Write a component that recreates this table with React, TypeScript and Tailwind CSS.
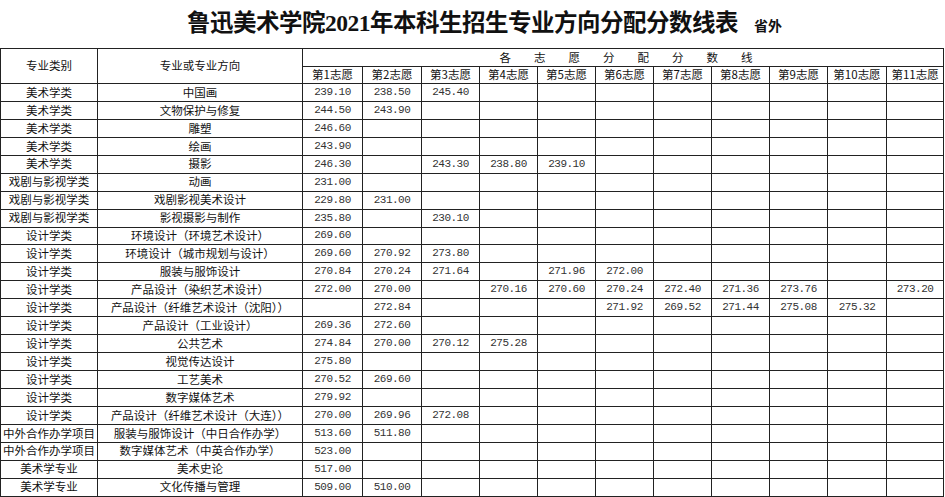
const cjk = { fontFamily: '"Noto Sans CJK SC", sans-serif' };

const rows: string[][] = [
  ['美术学类', '中国画', '239.10', '238.50', '245.40'],
  ['美术学类', '文物保护与修复', '244.50', '243.90'],
  ['美术学类', '雕塑', '246.60'],
  ['美术学类', '绘画', '243.90'],
  ['美术学类', '摄影', '246.30', '', '243.30', '238.80', '239.10'],
  ['戏剧与影视学类', '动画', '231.00'],
  ['戏剧与影视学类', '戏剧影视美术设计', '229.80', '231.00'],
  ['戏剧与影视学类', '影视摄影与制作', '235.80', '', '230.10'],
  ['设计学类', '环境设计（环境艺术设计）', '269.60'],
  ['设计学类', '环境设计（城市规划与设计）', '269.60', '270.92', '273.80'],
  ['设计学类', '服装与服饰设计', '270.84', '270.24', '271.64', '', '271.96', '272.00'],
  ['设计学类', '产品设计（染织艺术设计）', '272.00', '270.00', '', '270.16', '270.60', '270.24', '272.40', '271.36', '273.76', '', '273.20'],
  ['设计学类', '产品设计（纤维艺术设计（沈阳））', '', '272.84', '', '', '', '271.92', '269.52', '271.44', '275.08', '275.32'],
  ['设计学类', '产品设计（工业设计）', '269.36', '272.60'],
  ['设计学类', '公共艺术', '274.84', '270.00', '270.12', '275.28'],
  ['设计学类', '视觉传达设计', '275.80'],
  ['设计学类', '工艺美术', '270.52', '269.60'],
  ['设计学类', '数字媒体艺术', '279.92'],
  ['设计学类', '产品设计（纤维艺术设计（大连））', '270.00', '269.96', '272.08'],
  ['中外合作办学项目', '服装与服饰设计（中日合作办学）', '513.60', '511.80'],
  ['中外合作办学项目', '数字媒体艺术（中英合作办学）', '523.00'],
  ['美术学专业', '美术史论', '517.00'],
  ['美术学专业', '文化传播与管理', '509.00', '510.00'],
];

const choices = Array.from({ length: 11 }, (_, i) => i + 1);
const headerChars = ['各', '志', '愿', '分', '配', '分', '数', '线'];

export default function App() {
  return (
    <div className="w-[945px] h-[497px] overflow-hidden bg-white text-[#111]">
      {/* Title */}
      <div className="h-[48px] flex items-center pl-[187px] gap-[16px]">
        <span
          className="text-[23.5px] font-bold leading-none tracking-[-0.5px]"
          style={{ fontFamily: '"Liberation Serif", "Noto Sans CJK SC", serif' }}
        >
          鲁迅美术学院2021年本科生招生专业方向分配分数线表
        </span>
        <span className="text-[14px] font-bold leading-none mt-[2px]" style={cjk}>
          省外
        </span>
      </div>

      {/* Table */}
      <table className="table-fixed border-collapse w-[943px]" style={cjk}>
        <colgroup>
          <col className="w-[97px]" />
          <col className="w-[205px]" />
          <col className="w-[60px]" />
          <col className="w-[59px]" />
          <col className="w-[58px]" />
          <col className="w-[58px]" />
          <col className="w-[58px]" />
          <col className="w-[58px]" />
          <col className="w-[58px]" />
          <col className="w-[58px]" />
          <col className="w-[58px]" />
          <col className="w-[59px]" />
          <col className="w-[57px]" />
        </colgroup>
        <thead>
          <tr className="h-[18px]">
            <th rowSpan={2} className="border border-[#222] p-0 text-[11.5px] font-normal leading-none">
              专业类别
            </th>
            <th rowSpan={2} className="border border-[#222] p-0 text-[11.5px] font-normal leading-none">
              专业或专业方向
            </th>
            <th colSpan={11} className="border border-[#222] p-0 font-normal">
              <div className="flex justify-center gap-[23px] text-[11.5px] leading-none pl-[6px]">
                {headerChars.map((c, i) => (
                  <span key={i}>{c}</span>
                ))}
              </div>
            </th>
          </tr>
          <tr className="h-[17px]">
            {choices.map((n) => (
              <th
                key={n}
                className="border border-[#222] p-0 text-[11.5px] font-normal leading-none whitespace-nowrap"
              >
                第{n}志愿
              </th>
            ))}
          </tr>
        </thead>
        <tbody>
          {rows.map((r, i) => (
            <tr key={i} className="h-[17.95px]">
              <td className="border border-[#222] p-0 text-center text-[11.5px] leading-none whitespace-nowrap">
                {r[0]}
              </td>
              <td className="border border-[#222] p-0 text-center text-[11.5px] leading-none whitespace-nowrap">
                {r[1]}
              </td>
              {choices.map((n) => (
                <td
                  key={n}
                  className="border border-[#222] p-0 text-center text-[11px] leading-none tracking-[-0.5px] text-[#333]"
                  style={{ fontFamily: '"Liberation Mono", monospace' }}
                >
                  {r[n + 1] ?? ''}
                </td>
              ))}
            </tr>
          ))}
        </tbody>
      </table>
    </div>
  );
}
